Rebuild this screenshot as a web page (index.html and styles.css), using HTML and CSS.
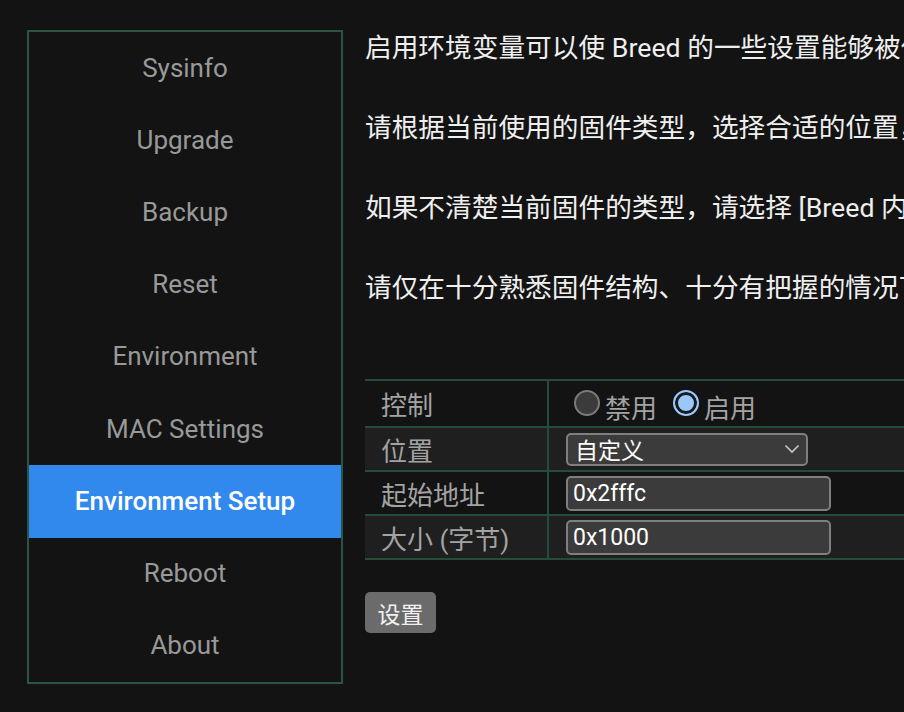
FILE: index.html
```html
<!DOCTYPE html>
<html lang="zh-CN">
<head>
<meta charset="utf-8">
<title>Environment Setup</title>
<link rel="stylesheet" href="styles.css">
</head>
<body>
<div class="page">
  <nav class="sidebar">
    <a class="nav-item">Sysinfo</a>
    <a class="nav-item">Upgrade</a>
    <a class="nav-item">Backup</a>
    <a class="nav-item">Reset</a>
    <a class="nav-item">Environment</a>
    <a class="nav-item">MAC Settings</a>
    <a class="nav-item active">Environment Setup</a>
    <a class="nav-item">Reboot</a>
    <a class="nav-item">About</a>
  </nav>
  <main class="content">
    <p class="note">启用环境变量可以使 Breed 的一些设置能够被保存，同时也能被固件所读取。</p>
    <p class="note">请根据当前使用的固件类型，选择合适的位置，以免环境变量与固件数据冲突。</p>
    <p class="note">如果不清楚当前固件的类型，请选择 [Breed 内部]。</p>
    <p class="note">请仅在十分熟悉固件结构、十分有把握的情况下使用自定义位置。</p>
    <table class="form-table">
      <tr class="row-first">
        <td class="label">控制</td>
        <td class="field">
          <label class="radio"><span class="radio-dot"></span>禁用</label>
          <label class="radio"><span class="radio-dot checked"></span>启用</label>
        </td>
      </tr>
      <tr class="row-alt">
        <td class="label">位置</td>
        <td class="field">
          <div class="select">
            <span>自定义</span>
            <svg class="chevron" width="16" height="10" viewBox="0 0 16 10"><path d="M1.5 1.5 L8 8 L14.5 1.5" fill="none" stroke="#c8c8c8" stroke-width="1.6"/></svg>
          </div>
        </td>
      </tr>
      <tr>
        <td class="label">起始地址</td>
        <td class="field"><input class="text-input" type="text" value="0x2fffc"></td>
      </tr>
      <tr class="row-alt">
        <td class="label">大小 (字节)</td>
        <td class="field"><input class="text-input" type="text" value="0x1000"></td>
      </tr>
    </table>
    <button class="submit" type="button">设置</button>
  </main>
</div>
</body>
</html>
```

FILE: styles.css
```css
html, body {
  margin: 0;
  padding: 0;
  background: #131313;
  overflow: hidden;
  width: 904px;
  height: 712px;
}

body {
  font-family: Roboto, "Noto Sans CJK SC", sans-serif;
  color: #e8e8e8;
}

.page {
  display: flex;
  align-items: flex-start;
  padding: 30px 0 0 27px;
  width: 1400px;
}

.sidebar {
  box-sizing: border-box;
  width: 316px;
  height: 654px;
  flex: none;
  border: 2px solid #2a5543;
  display: grid;
  grid-template-rows: repeat(9, 1fr);
}

.nav-item {
  display: flex;
  align-items: center;
  justify-content: center;
  font-size: 26px;
  color: #999999;
  text-decoration: none;
  padding-bottom: 1px;
}

.nav-item.active {
  background: #3189ee;
  color: #ffffff;
  font-weight: 500;
}

.content {
  margin-left: 22px;
  width: 1000px;
  flex: none;
}

.note {
  margin: 0 0 44px;
  font-size: 26.7px;
  line-height: 36px;
  white-space: nowrap;
  color: #efefef;
}

.form-table {
  margin-top: 73px;
  border-collapse: collapse;
  width: 900px;
  border-bottom: 2px solid #234c3b;
}

.form-table td {
  border-top: 2px solid #234c3b;
  height: 42px;
  padding: 0;
  vertical-align: middle;
}

.form-table .row-first td {
  height: 45px;
}

.form-table .row-alt td {
  background: #1f1f1f;
}

.form-table .label {
  width: 166px;
  padding-left: 16px;
  border-right: 2px solid #234c3b;
  font-size: 26px;
  color: #a3a3a3;
  white-space: nowrap;
}

.form-table .field {
  padding-left: 17px;
}

.radio {
  display: inline-flex;
  align-items: center;
  font-size: 26px;
  color: #a3a3a3;
  margin-right: 4px;
  position: relative;
  top: 3px;
}

.radio-dot {
  box-sizing: border-box;
  width: 26px;
  height: 26px;
  border-radius: 50%;
  border: 2px solid #7a7a7a;
  background: #3b3b3b;
  margin: 0 5px 0 8px;
  position: relative;
  top: -4px;
}

.radio-dot.checked {
  border: 2px solid #99c8ff;
  background: #99c8ff;
  box-shadow: inset 0 0 0 3px #1a1a1a;
}

.select {
  box-sizing: border-box;
  width: 242px;
  height: 33px;
  border: 2px solid #7f7f7f;
  border-radius: 5px;
  background: #3b3b3b;
  display: flex;
  align-items: center;
  justify-content: space-between;
  padding: 0 6px 0 7px;
  font-size: 23px;
  color: #ffffff;
}

.text-input {
  box-sizing: border-box;
  display: block;
  width: 265px;
  height: 35px;
  border: 2px solid #7f7f7f;
  border-radius: 5px;
  background: #3b3b3b;
  color: #ffffff;
  font-family: Roboto, "Noto Sans CJK SC", sans-serif;
  font-size: 23px;
  padding: 0 5px;
  margin: 0;
}

.submit {
  margin-top: 32px;
  width: 71px;
  height: 41px;
  border: none;
  border-radius: 5px;
  background: #6b6b6b;
  color: #f0f0f0;
  font-family: Roboto, "Noto Sans CJK SC", sans-serif;
  font-size: 23px;
  padding: 0;
  display: block;
}
```
